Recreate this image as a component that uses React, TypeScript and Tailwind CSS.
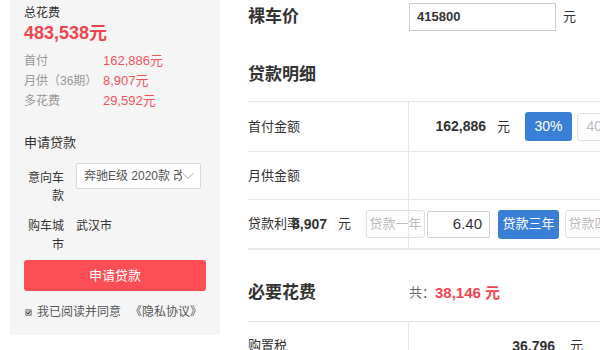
const font = { fontFamily: '"Liberation Sans", "Noto Sans CJK SC", sans-serif' };

function Summary() {
  const rows = [
    { label: "首付", value: "162,886元" },
    { label: "月供（36期）", value: "8,907元" },
    { label: "多花费", value: "29,592元" },
  ];
  return (
    <div>
      <div className="text-[12px] leading-[18px] text-[#333] pt-[4px]">总花费</div>
      <div className="text-[18px] leading-[22px] font-bold text-[#f0454f]">483,538元</div>
      <div className="mt-[7px]">
        {rows.map((r) => (
          <div key={r.label} className="flex leading-[20px]">
            <span className="w-[79px] text-[12px] text-[#999] whitespace-nowrap">{r.label}</span>
            <span className="text-[13px] text-[#f0545b]">{r.value}</span>
          </div>
        ))}
      </div>
    </div>
  );
}

function ApplyForm() {
  return (
    <div>
      <div className="mt-[22px] text-[13px] leading-[20px] text-[#333]">申请贷款</div>
      <div className="mt-[10px] flex gap-[12px]">
        <div className="w-[40px] pt-[6px] text-right text-[12px] leading-[18px] text-[#333]">意向车款</div>
        <div className="w-[125px] h-[26px] bg-white border border-[#d9d9d9] rounded-[2px] flex items-center pl-[7px] pr-[6px] overflow-hidden">
          <span className="flex-1 text-[12px] text-[#555] whitespace-nowrap overflow-hidden">奔驰E级 2020款 改</span>
          <svg width="12" height="8" viewBox="0 0 12 8" className="shrink-0">
            <path d="M1 1.5 L6 6.5 L11 1.5" fill="none" stroke="#c8c8c8" strokeWidth="1.2" />
          </svg>
        </div>
      </div>
      <div className="mt-[12px] flex gap-[12px]">
        <div className="w-[40px] text-right text-[12px] leading-[19px] text-[#333]">购车城市</div>
        <div className="text-[12px] leading-[19px] text-[#333]">武汉市</div>
      </div>
      <button className="mt-[5px] w-[182px] h-[31px] rounded-[3px] bg-[#fd4d55] text-white text-[13px]">申请贷款</button>
      <div className="mt-[12px] flex items-center leading-[18px] text-[12px] text-[#555]">
        <span className="w-[7px] h-[7px] bg-[#bbb] border border-[#999] rounded-[1px] flex items-center justify-center mr-[5px] ml-[1px]">
          <svg width="5" height="5" viewBox="0 0 5 5">
            <path d="M0.5 2.5 L2 4 L4.5 1" fill="none" stroke="#333" strokeWidth="1" />
          </svg>
        </span>
        <span>我已阅读并同意</span>
        <span className="ml-[9px]">《隐私协议》</span>
      </div>
    </div>
  );
}

function Box({ children, active }: { children: React.ReactNode; active?: boolean }) {
  return (
    <div
      className={
        active
          ? "shrink-0 h-[29px] rounded-[3px] bg-[#3a7fd6] text-white flex items-center justify-center"
          : "shrink-0 h-[28px] rounded-[3px] border border-[#e0e0e0] text-[#bbb] flex items-center justify-center"
      }
    >
      {children}
    </div>
  );
}

export default function App() {
  return (
    <div className="w-[600px] h-[350px] overflow-hidden bg-white flex text-[#333]" style={font}>
      <aside className="ml-[10px] w-[210px] h-[335px] shrink-0 bg-[#f5f5f5] pl-[14px]">
        <Summary />
        <ApplyForm />
      </aside>

      <main className="ml-[28px] w-[352px] shrink-0">
        <div className="pt-[3px] flex items-center">
          <div className="w-[161px] text-[17px] font-bold leading-[28px]">裸车价</div>
          <div className="w-[147px] h-[28px] border border-[#ccc] flex items-center px-[7px] text-[13px] font-bold">415800</div>
          <span className="ml-[7px] text-[13px]">元</span>
        </div>

        <div className="mt-[32px] text-[17px] font-bold leading-[24px]">贷款明细</div>

        <div className="mt-[14px] relative border-t border-[#e6e6e6] w-[420px]">
          <div className="h-[50px] flex items-center border-b border-[#e6e6e6] text-[13px]">
            <div className="w-[161px] shrink-0">首付金额</div>
            <div className="w-[77px] text-right text-[14px] font-bold">162,886</div>
            <span className="ml-[11px]">元</span>
            <div className="ml-[15px] w-[47px]">
              <Box active>
                <span className="text-[14px]">30%</span>
              </Box>
            </div>
            <div className="ml-[5px] w-[47px]">
              <Box>
                <span className="text-[14px]">40%</span>
              </Box>
            </div>
          </div>
          <div className="h-[48px] flex items-center border-b border-[#e6e6e6] text-[13px]">
            <div className="w-[161px] shrink-0">月供金额</div>
          </div>
          <div className="h-[50px] flex items-center border-b-2 border-[#e8e8e8] text-[13px]">
            <div className="w-[44px] shrink-0 whitespace-nowrap">贷款利率</div>
            <span className="text-[14px] font-bold">8,907</span>
            <span className="ml-[11px]">元</span>
            <div className="ml-[15px] w-[59px]">
              <Box>贷款一年</Box>
            </div>
            <div className="ml-[2px] w-[63px] h-[27px] bg-white border border-[#d0d0d0] rounded-[2px] flex items-center justify-end pr-[7px] text-[15px]">
              6.40
            </div>
            <div className="ml-[8px] w-[61px]">
              <Box active>贷款三年</Box>
            </div>
            <div className="ml-[6px] w-[59px]">
              <Box>贷款四年</Box>
            </div>
          </div>
          <div className="absolute left-[160px] top-0 bottom-0 w-px bg-[#e6e6e6] pointer-events-none" />
        </div>

        <div className="mt-[31px] flex items-center leading-[24px]">
          <div className="w-[161px] text-[17px] font-bold">必要花费</div>
          <span className="text-[13px] text-[#666]">共：</span>
          <span className="text-[15px] font-bold text-[#f0454f]">38,146 元</span>
        </div>

        <div className="mt-[16px] border-t border-[#e6e6e6] flex text-[13px]">
          <div className="w-[161px] shrink-0 border-r border-[#e6e6e6] pt-[14px] h-[40px]">购置税</div>
          <div className="w-[146px] text-right pt-[14px] text-[14px] font-bold">36,796</div>
          <span className="ml-[15px] pt-[14px]">元</span>
        </div>
      </main>
    </div>
  );
}
